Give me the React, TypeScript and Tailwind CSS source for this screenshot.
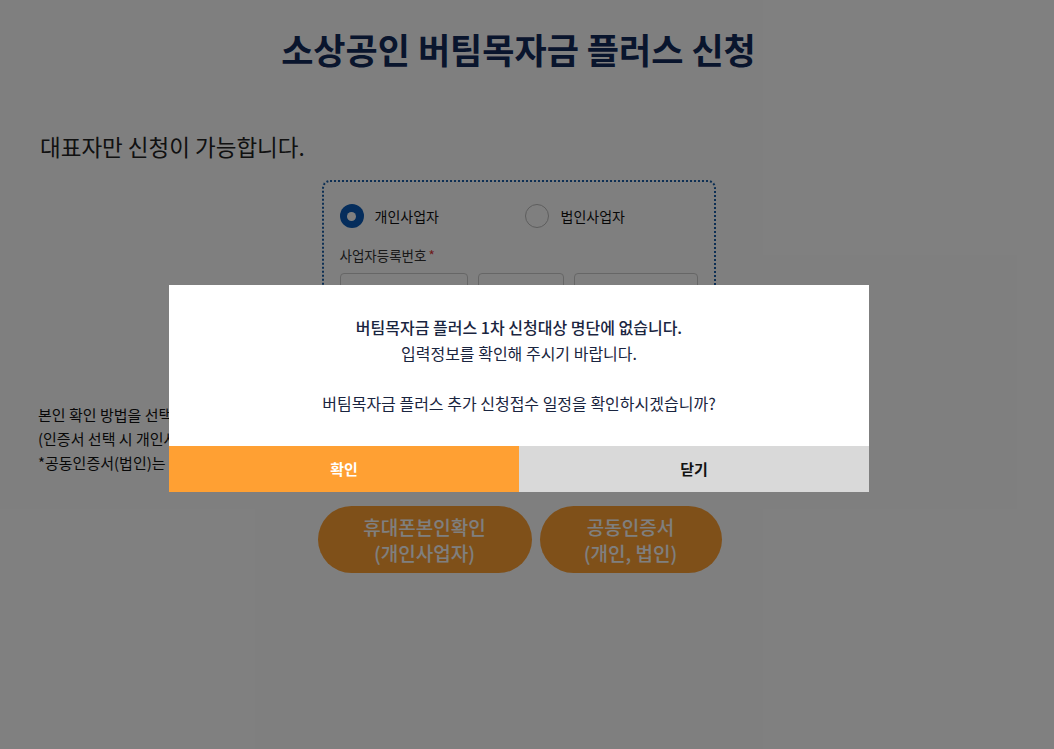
import React from 'react';

const font = { fontFamily: '"Noto Sans CJK KR", "Noto Sans", sans-serif' };

const App: React.FC = () => {
  return (
    <div className="relative min-h-screen w-full bg-white overflow-hidden" style={font}>
      <div className="w-[1037px]">
        <h1 className="pt-[25px] text-center text-[35px] font-bold leading-[48px] text-[#132a5a]">
          소상공인 버팀목자금 플러스 신청
        </h1>

        <p className="mt-[57px] pl-[40px] text-[22.5px] leading-[32px] text-[#222]">
          대표자만 신청이 가능합니다.
        </p>

        <div className="mx-auto mt-[18px] w-[394px] h-[170px] rounded-lg border-2 border-dotted border-[#1a5fa8] px-[16px] pt-[22px]">
          <div className="flex items-center">
            <div className="flex w-[185px] items-center gap-[11px]">
              <span className="flex h-[24px] w-[24px] items-center justify-center rounded-full bg-[#0a5bb8]">
                <span className="h-[9px] w-[9px] rounded-full bg-white" />
              </span>
              <span className="text-[14px] text-[#111]">개인사업자</span>
            </div>
            <div className="flex items-center gap-[12px]">
              <span className="h-[24px] w-[24px] rounded-full border border-[#bbb] bg-white" />
              <span className="text-[14px] text-[#111]">법인사업자</span>
            </div>
          </div>
          <div className="mt-[17px] text-[13.5px] text-[#333]">
            사업자등록번호<span className="ml-[2px] text-[#d33]">*</span>
          </div>
          <div className="mt-[8px] flex gap-[10px]">
            <div className="h-[40px] w-[128px] rounded border border-[#ccc]" />
            <div className="h-[40px] w-[86px] rounded border border-[#ccc]" />
            <div className="h-[40px] w-[124px] rounded border border-[#ccc]" />
          </div>
        </div>

        <div className="mt-[53px] pl-[38px] text-[15px] leading-[24px] text-[#111]">
          <p>본인 확인 방법을 선택해 주시기 바랍니다.</p>
          <p>(인증서 선택 시 개인사업자는 개인 공동인증서로 확인합니다.)</p>
          <p>*공동인증서(법인)는 법인사업자만 이용 가능합니다.</p>
        </div>

        <div className="mt-[31px] flex justify-center gap-[8px] pl-[2px]">
          <button className="h-[67px] w-[214px] rounded-full bg-[#ffa033] text-[19px] font-medium leading-[26px] text-white">
            휴대폰본인확인
            <br />
            (개인사업자)
          </button>
          <button className="h-[67px] w-[182px] rounded-full bg-[#ffa033] text-[19px] font-medium leading-[26px] text-white">
            공동인증서
            <br />
            (개인, 법인)
          </button>
        </div>
      </div>

      <div className="absolute inset-0 bg-black/50" />

      <div className="absolute left-[169px] top-[285px] w-[700px] bg-white">
        <div className="flex flex-col items-center pt-[31px] pb-[32px] text-[16px] text-[#1a2540]">
          <p className="font-medium leading-[22px]">버팀목자금 플러스 1차 신청대상 명단에 없습니다.</p>
          <p className="mt-[4px] leading-[22px]">입력정보를 확인해 주시기 바랍니다.</p>
          <p className="mt-[28px] leading-[22px]">버팀목자금 플러스 추가 신청접수 일정을 확인하시겠습니까?</p>
        </div>
        <div className="flex h-[46px]">
          <button className="flex-1 bg-[#ffa033] text-[15px] font-bold text-white">확인</button>
          <button className="flex-1 bg-[#d9d9d9] text-[15px] font-bold text-[#111]">닫기</button>
        </div>
      </div>
    </div>
  );
};

export default App;
